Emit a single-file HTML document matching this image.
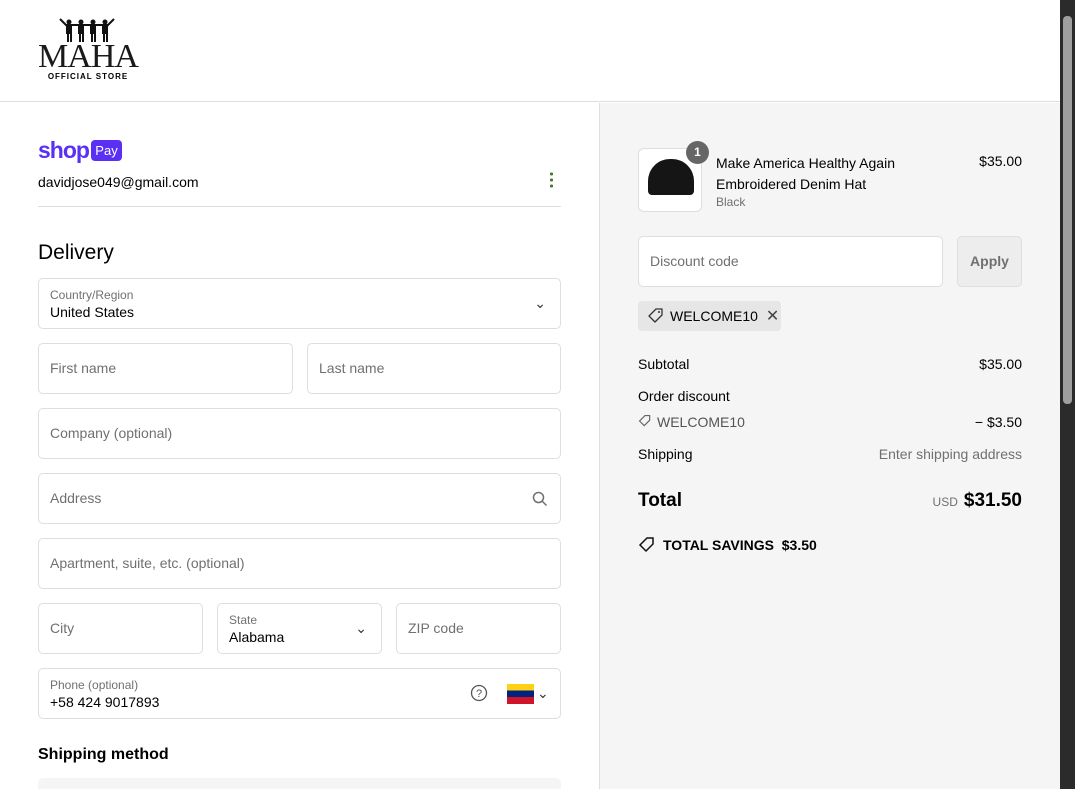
<!DOCTYPE html><html><head><style>
*{box-sizing:border-box;margin:0;padding:0}
body{width:1075px;height:789px;overflow:hidden;font-family:"Liberation Sans",sans-serif;color:#000;background:#fff;position:relative;font-size:14px}
.a{position:absolute}
.f{position:absolute;border:1px solid #dedede;border-radius:5px;height:51px;background:#fff;color:#707070;font-size:14px;padding:0 11px;line-height:49px}
.lab{font-size:12px;color:#707070;line-height:14px;position:absolute;left:11px;top:9px}
.val{font-size:14px;color:#000;line-height:16px;position:absolute;left:11px;top:25px}
.r{position:absolute;font-size:14px;color:#000}
</style></head><body>
<div class="a" style="left:0;top:0;width:1060px;height:102px;border-bottom:1px solid #dedede"></div>
<div class="a" style="left:38px;top:18px;width:100px;text-align:center">
<svg width="60" height="24" viewBox="0 0 60 24" style="display:block;margin:0 auto"><g fill="#111"><rect x="8" y="6" width="6" height="10"/><rect x="20" y="6" width="6" height="10"/><rect x="32" y="6" width="6" height="10"/><rect x="44" y="6" width="6" height="10"/><circle cx="11" cy="4" r="2.5"/><circle cx="23" cy="4" r="2.5"/><circle cx="35" cy="4" r="2.5"/><circle cx="47" cy="4" r="2.5"/><rect x="9" y="15" width="2" height="9"/><rect x="12" y="15" width="2" height="9"/><rect x="21" y="15" width="2" height="9"/><rect x="24" y="15" width="2" height="9"/><rect x="33" y="15" width="2" height="9"/><rect x="36" y="15" width="2" height="9"/><rect x="45" y="15" width="2" height="9"/><rect x="48" y="15" width="2" height="9"/><path d="M2 1L9 8M56 1L49 8M14 7L20 7M26 7L32 7M38 7L44 7" stroke="#111" stroke-width="2"/></g></svg>
<div style="font-family:'Liberation Serif',serif;font-size:34px;line-height:30px;letter-spacing:-1px;color:#1a1a1a">MAHA</div>
<div style="font-size:8px;font-weight:bold;letter-spacing:1px;line-height:10px">OFFICIAL STORE</div></div>
<div class="a" style="left:599px;top:103px;width:461px;height:686px;background:#f5f5f5;border-left:1px solid #dedede"></div>
<div class="a" style="left:1060px;top:0;width:15px;height:789px;background:#2b2b2b"></div>
<div class="a" style="left:1063px;top:16px;width:9px;height:388px;background:#9f9f9f;border-radius:4px"></div>
<div class="a" style="left:38px;top:137px;font-size:23px;font-weight:bold;color:#5a31f4;letter-spacing:-1px;line-height:26px">shop</div>
<div class="a" style="left:91px;top:140px;width:31px;height:21px;background:#5a31f4;border-radius:4px;color:#fff;font-size:13px;text-align:center;line-height:21px">Pay</div>
<div class="r" style="left:38px;top:174px">davidjose049@gmail.com</div>
<div class="a" style="left:550px;top:171px;width:3px;height:17px;background:radial-gradient(circle,#4a7c2a 1.5px,transparent 1.6px) 0 0/3px 6px"></div>
<div class="a" style="left:38px;top:206px;width:523px;height:1px;background:#dedede"></div>
<div class="a" style="left:38px;top:240px;font-size:21px;line-height:26px">Delivery</div>
<div class="f" style="left:38px;top:278px;width:523px"><div class="lab">Country/Region</div><div class="val">United States</div><span style="position:absolute;right:14px;top:0;color:#333">⌄</span></div>
<div class="f" style="left:38px;top:343px;width:255px">First name</div>
<div class="f" style="left:307px;top:343px;width:254px">Last name</div>
<div class="f" style="left:38px;top:408px;width:523px">Company (optional)</div>
<div class="f" style="left:38px;top:473px;width:523px">Address<svg class="a" style="right:12px;top:17px" width="16" height="16" viewBox="0 0 16 16"><circle cx="6.5" cy="6.5" r="5" fill="none" stroke="#707070" stroke-width="1.5"/><path d="M10 10L14.5 14.5" stroke="#707070" stroke-width="1.5"/></svg></div>
<div class="f" style="left:38px;top:538px;width:523px">Apartment, suite, etc. (optional)</div>
<div class="f" style="left:38px;top:603px;width:165px">City</div>
<div class="f" style="left:217px;top:603px;width:165px"><div class="lab">State</div><div class="val">Alabama</div><span style="position:absolute;right:14px;top:0;color:#333">⌄</span></div>
<div class="f" style="left:396px;top:603px;width:165px">ZIP code</div>
<div class="f" style="left:38px;top:668px;width:523px"><div class="lab">Phone (optional)</div><div class="val">+58 424 9017893</div>
<svg class="a" style="left:431px;top:15px" width="18" height="18" viewBox="0 0 18 18"><circle cx="9" cy="9" r="7.5" fill="none" stroke="#555" stroke-width="1.3"/><text x="9" y="13" font-size="11" text-anchor="middle" fill="#555" font-family="Liberation Sans">?</text></svg>
<div class="a" style="left:468px;top:15px;width:27px;height:20px;background:linear-gradient(#fcd116 0 33%,#00247d 33% 66%,#cf142b 66%)"></div><span style="position:absolute;left:498px;top:0;color:#333">⌄</span></div>
<div class="a" style="left:38px;top:746px;font-size:16px;font-weight:bold">Shipping method</div>
<div class="a" style="left:38px;top:778px;width:523px;height:11px;background:#f5f5f5;border-radius:5px 5px 0 0"></div>
<div class="a" style="left:638px;top:148px;width:64px;height:64px;border:1px solid #dedede;border-radius:6px;background:#fff"><div class="a" style="left:9px;top:10px;width:46px;height:36px;background:#151515;border-radius:22px 22px 4px 4px"></div></div>
<div class="a" style="left:686px;top:141px;width:23px;height:23px;border-radius:50%;background:#666;color:#fff;font-size:12px;text-align:center;line-height:23px;font-weight:bold">1</div>
<div class="r" style="left:716px;top:153px;line-height:21px">Make America Healthy Again<br>Embroidered Denim Hat</div>
<div class="a" style="left:716px;top:195px;font-size:12px;color:#707070">Black</div>
<div class="r" style="right:53px;top:153px">$35.00</div>
<div class="f" style="left:638px;top:236px;width:305px">Discount code</div>
<div class="a" style="left:957px;top:236px;width:65px;height:51px;border:1px solid #dedede;border-radius:5px;background:#ededed;color:#707070;font-weight:bold;text-align:center;line-height:49px">Apply</div>
<div class="a" style="left:638px;top:301px;width:143px;height:30px;background:#e6e6e6;border-radius:4px;font-size:14px;line-height:30px;padding-left:32px">WELCOME10<span style="margin-left:8px;font-size:16px;color:#444">✕</span></div>
<svg class="a" style="left:647px;top:307px" width="18" height="18" viewBox="0 0 18 18"><path d="M9 2H15V8L8 15L2 9Z" fill="none" stroke="#333" stroke-width="1.3" stroke-linejoin="round"/><circle cx="12" cy="5" r="1" fill="#333"/></svg>
<div class="r" style="left:638px;top:356px">Subtotal</div><div class="r" style="right:53px;top:356px">$35.00</div>
<div class="r" style="left:638px;top:388px">Order discount</div>
<svg class="a" style="left:638px;top:414px" width="14" height="14" viewBox="0 0 18 18"><path d="M9 2H15V8L8 15L2 9Z" fill="none" stroke="#666" stroke-width="1.5"/></svg>
<div class="r" style="left:657px;top:414px;color:#555">WELCOME10</div><div class="r" style="right:53px;top:414px">− $3.50</div>
<div class="r" style="left:638px;top:446px">Shipping</div><div class="r" style="right:53px;top:446px;color:#707070">Enter shipping address</div>
<div class="a" style="left:638px;top:490px;font-size:19px;font-weight:bold">Total</div>
<div class="a" style="right:53px;top:490px;font-size:19px;font-weight:bold"><span style="font-size:12px;color:#707070;font-weight:normal;margin-right:6px">USD</span>$31.50</div>
<svg class="a" style="left:638px;top:536px" width="18" height="18" viewBox="0 0 18 18"><path d="M9 2H15V8L8 15L2 9Z" fill="none" stroke="#111" stroke-width="1.5"/></svg>
<div class="a" style="left:663px;top:537px;font-size:14px;font-weight:bold">TOTAL SAVINGS&nbsp; $3.50</div>
</body></html>
